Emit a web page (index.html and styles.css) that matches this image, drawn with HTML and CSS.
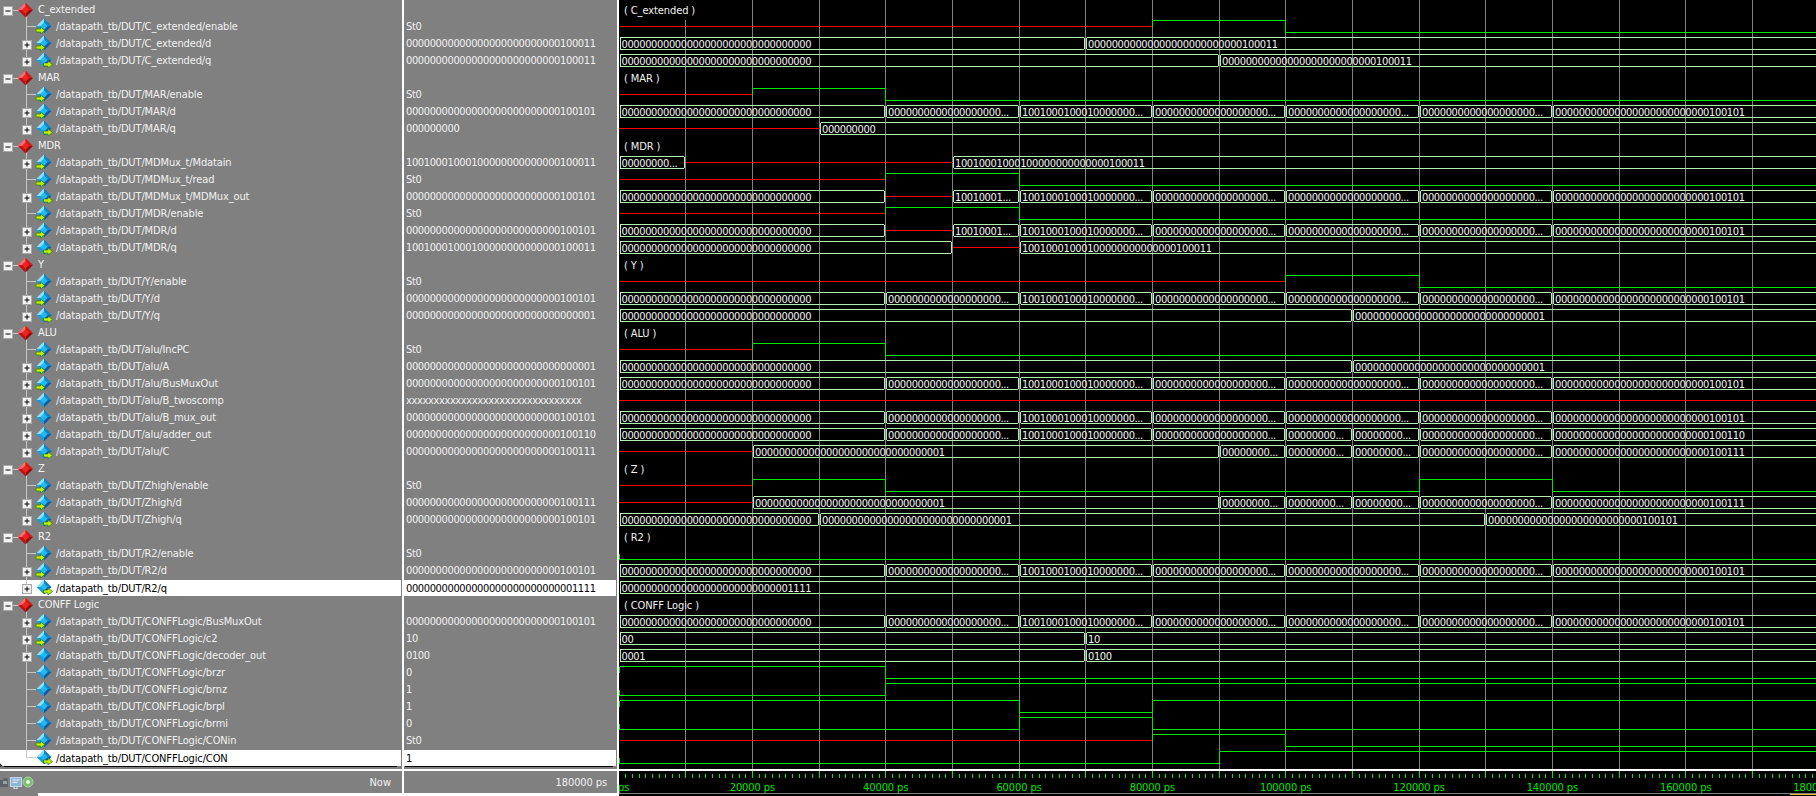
FILE: index.html
```html
<!DOCTYPE html>
<html lang="en">
<head>
<meta charset="utf-8">
<title>Wave - datapath_tb</title>
<link rel="stylesheet" href="styles.css">
</head>
<body>
<svg class="defs" aria-hidden="true">
  <defs>
    <symbol id="dia" viewBox="0 0 16 16">
      <polygon points="8,0 8,8 0,8" fill="#8fe0fa"/>
      <polygon points="8,0 16,8 8,8" fill="#0c86c8"/>
      <polygon points="16,8 8,16 8,8" fill="#0a5fa8"/>
      <polygon points="0,8 8,16 8,8" fill="#1c9ad8"/>
      <polygon points="8,4 12,8 8,12 4,8" fill="#22b8f0"/>
    </symbol>
    <symbol id="dia-r" viewBox="0 0 16 16">
      <polygon points="8,0 8,8 0,8" fill="#ff6a6a"/>
      <polygon points="8,0 16,8 8,8" fill="#d81818"/>
      <polygon points="16,8 8,16 8,8" fill="#9a0808"/>
      <polygon points="0,8 8,16 8,8" fill="#c01010"/>
      <polygon points="8,4 12,8 8,12 4,8" fill="#f02424"/>
    </symbol>
    <symbol id="arr" viewBox="0 0 10 8">
      <polygon points="0.5,2.5 5,2.5 5,0.5 9.5,4 5,7.5 5,5.5 0.5,5.5" fill="#c4f000" stroke="#1f7a10" stroke-width="0.7"/>
    </symbol>
    <g id="box"><rect x="22.5" y="5.5" width="9" height="9" fill="#f2f2f2" stroke="#a8a8a8"/><path d="M24.5 10h5M27 7.500v5" stroke="#000" fill="none"/></g>
    <path id="v-full" d="M26.5 0v17" stroke="#c8c8c8" fill="none"/>
    <path id="v-end" d="M26.5 0v9" stroke="#c8c8c8" fill="none"/>
    <path id="h" d="M26 8.5h10" stroke="#c8c8c8" fill="none"/>
    <g id="b"><use href="#dia" x="36" y="0.5" width="16" height="15"/></g>
    <g id="in"><use href="#arr" x="35.5" y="8.5" width="10" height="8"/></g>
    <g id="out"><use href="#arr" x="43" y="8.5" width="10" height="8"/></g>

    <symbol id="group" viewBox="0 0 38 17">
      <rect x="3.5" y="5.5" width="9" height="9" fill="#f2f2f2" stroke="#a8a8a8"/>
      <path d="M5.5 10h5" stroke="#000" fill="none"/>
      <path d="M13 9.5h6M26.5 14v3" stroke="#c8c8c8" fill="none"/>
      <use href="#dia-r" x="18" y="1.5" width="15" height="15"/>
    </symbol>
    <symbol id="leaf-in" viewBox="0 0 54 17"><use href="#v-full"/><use href="#h"/><use href="#b"/><use href="#in"/></symbol>
    <symbol id="leaf" viewBox="0 0 54 17"><use href="#v-full"/><use href="#h"/><use href="#b"/></symbol>
    <symbol id="leaf-out-end" viewBox="0 0 54 17"><use href="#v-end"/><use href="#h"/><use href="#b"/><use href="#out"/></symbol>
    <symbol id="bus-in" viewBox="0 0 54 17"><use href="#v-full"/><use href="#b"/><use href="#in"/><use href="#box"/></symbol>
    <symbol id="bus" viewBox="0 0 54 17"><use href="#v-full"/><use href="#b"/><use href="#box"/></symbol>
    <symbol id="bus-out" viewBox="0 0 54 17"><use href="#v-full"/><use href="#b"/><use href="#out"/><use href="#box"/></symbol>
    <symbol id="bus-out-end" viewBox="0 0 54 17"><use href="#v-end"/><use href="#b"/><use href="#out"/><use href="#box"/></symbol>
  </defs>
</svg>

<main class="window">
  <section class="names">
    <div class="row group"><svg class="ic"><use href="#group"/></svg><span>C_extended</span></div>
    <div class="row"><svg class="ic"><use href="#leaf-in"/></svg><span>/datapath_tb/DUT/C_extended/enable</span></div>
    <div class="row"><svg class="ic"><use href="#bus-in"/></svg><span>/datapath_tb/DUT/C_extended/d</span></div>
    <div class="row"><svg class="ic"><use href="#bus-out-end"/></svg><span>/datapath_tb/DUT/C_extended/q</span></div>
    <div class="row group"><svg class="ic"><use href="#group"/></svg><span>MAR</span></div>
    <div class="row"><svg class="ic"><use href="#leaf-in"/></svg><span>/datapath_tb/DUT/MAR/enable</span></div>
    <div class="row"><svg class="ic"><use href="#bus-in"/></svg><span>/datapath_tb/DUT/MAR/d</span></div>
    <div class="row"><svg class="ic"><use href="#bus-out-end"/></svg><span>/datapath_tb/DUT/MAR/q</span></div>
    <div class="row group"><svg class="ic"><use href="#group"/></svg><span>MDR</span></div>
    <div class="row"><svg class="ic"><use href="#bus-in"/></svg><span>/datapath_tb/DUT/MDMux_t/Mdatain</span></div>
    <div class="row"><svg class="ic"><use href="#leaf-in"/></svg><span>/datapath_tb/DUT/MDMux_t/read</span></div>
    <div class="row"><svg class="ic"><use href="#bus-out"/></svg><span>/datapath_tb/DUT/MDMux_t/MDMux_out</span></div>
    <div class="row"><svg class="ic"><use href="#leaf-in"/></svg><span>/datapath_tb/DUT/MDR/enable</span></div>
    <div class="row"><svg class="ic"><use href="#bus-in"/></svg><span>/datapath_tb/DUT/MDR/d</span></div>
    <div class="row"><svg class="ic"><use href="#bus-out-end"/></svg><span>/datapath_tb/DUT/MDR/q</span></div>
    <div class="row group"><svg class="ic"><use href="#group"/></svg><span>Y</span></div>
    <div class="row"><svg class="ic"><use href="#leaf-in"/></svg><span>/datapath_tb/DUT/Y/enable</span></div>
    <div class="row"><svg class="ic"><use href="#bus-in"/></svg><span>/datapath_tb/DUT/Y/d</span></div>
    <div class="row"><svg class="ic"><use href="#bus-out-end"/></svg><span>/datapath_tb/DUT/Y/q</span></div>
    <div class="row group"><svg class="ic"><use href="#group"/></svg><span>ALU</span></div>
    <div class="row"><svg class="ic"><use href="#leaf-in"/></svg><span>/datapath_tb/DUT/alu/IncPC</span></div>
    <div class="row"><svg class="ic"><use href="#bus-in"/></svg><span>/datapath_tb/DUT/alu/A</span></div>
    <div class="row"><svg class="ic"><use href="#bus-in"/></svg><span>/datapath_tb/DUT/alu/BusMuxOut</span></div>
    <div class="row"><svg class="ic"><use href="#bus"/></svg><span>/datapath_tb/DUT/alu/B_twoscomp</span></div>
    <div class="row"><svg class="ic"><use href="#bus"/></svg><span>/datapath_tb/DUT/alu/B_mux_out</span></div>
    <div class="row"><svg class="ic"><use href="#bus"/></svg><span>/datapath_tb/DUT/alu/adder_out</span></div>
    <div class="row"><svg class="ic"><use href="#bus-out-end"/></svg><span>/datapath_tb/DUT/alu/C</span></div>
    <div class="row group"><svg class="ic"><use href="#group"/></svg><span>Z</span></div>
    <div class="row"><svg class="ic"><use href="#leaf-in"/></svg><span>/datapath_tb/DUT/Zhigh/enable</span></div>
    <div class="row"><svg class="ic"><use href="#bus-in"/></svg><span>/datapath_tb/DUT/Zhigh/d</span></div>
    <div class="row"><svg class="ic"><use href="#bus-out-end"/></svg><span>/datapath_tb/DUT/Zhigh/q</span></div>
    <div class="row group"><svg class="ic"><use href="#group"/></svg><span>R2</span></div>
    <div class="row"><svg class="ic"><use href="#leaf-in"/></svg><span>/datapath_tb/DUT/R2/enable</span></div>
    <div class="row"><svg class="ic"><use href="#bus-in"/></svg><span>/datapath_tb/DUT/R2/d</span></div>
    <div class="row sel"><svg class="ic"><use href="#bus-out-end"/></svg><span>/datapath_tb/DUT/R2/q</span></div>
    <div class="row group"><svg class="ic"><use href="#group"/></svg><span>CONFF Logic</span></div>
    <div class="row"><svg class="ic"><use href="#bus-in"/></svg><span>/datapath_tb/DUT/CONFFLogic/BusMuxOut</span></div>
    <div class="row"><svg class="ic"><use href="#bus-in"/></svg><span>/datapath_tb/DUT/CONFFLogic/c2</span></div>
    <div class="row"><svg class="ic"><use href="#bus"/></svg><span>/datapath_tb/DUT/CONFFLogic/decoder_out</span></div>
    <div class="row"><svg class="ic"><use href="#leaf"/></svg><span>/datapath_tb/DUT/CONFFLogic/brzr</span></div>
    <div class="row"><svg class="ic"><use href="#leaf"/></svg><span>/datapath_tb/DUT/CONFFLogic/brnz</span></div>
    <div class="row"><svg class="ic"><use href="#leaf"/></svg><span>/datapath_tb/DUT/CONFFLogic/brpl</span></div>
    <div class="row"><svg class="ic"><use href="#leaf"/></svg><span>/datapath_tb/DUT/CONFFLogic/brmi</span></div>
    <div class="row"><svg class="ic"><use href="#leaf-in"/></svg><span>/datapath_tb/DUT/CONFFLogic/CONin</span></div>
    <div class="row sel"><svg class="ic"><use href="#leaf-out-end"/></svg><span>/datapath_tb/DUT/CONFFLogic/CON</span></div>
    <div class="ruler"></div>
    <svg class="pointer" viewBox="0 0 4 6"><path d="M0 0l3.5 3.5H1.5L0 5.5z" fill="#000" stroke="#fff" stroke-width="0.4"/></svg>
  </section>

  <section class="values">
    <div class="row"></div>
    <div class="row">St0</div>
    <div class="row">00000000000000000000000000100011</div>
    <div class="row">00000000000000000000000000100011</div>
    <div class="row"></div>
    <div class="row">St0</div>
    <div class="row">00000000000000000000000000100101</div>
    <div class="row">000000000</div>
    <div class="row"></div>
    <div class="row">10010001000100000000000000100011</div>
    <div class="row">St0</div>
    <div class="row">00000000000000000000000000100101</div>
    <div class="row">St0</div>
    <div class="row">00000000000000000000000000100101</div>
    <div class="row">10010001000100000000000000100011</div>
    <div class="row"></div>
    <div class="row">St0</div>
    <div class="row">00000000000000000000000000100101</div>
    <div class="row">00000000000000000000000000000001</div>
    <div class="row"></div>
    <div class="row">St0</div>
    <div class="row">00000000000000000000000000000001</div>
    <div class="row">00000000000000000000000000100101</div>
    <div class="row">xxxxxxxxxxxxxxxxxxxxxxxxxxxxxxxx</div>
    <div class="row">00000000000000000000000000100101</div>
    <div class="row">00000000000000000000000000100110</div>
    <div class="row">00000000000000000000000000100111</div>
    <div class="row"></div>
    <div class="row">St0</div>
    <div class="row">00000000000000000000000000100111</div>
    <div class="row">00000000000000000000000000100101</div>
    <div class="row"></div>
    <div class="row">St0</div>
    <div class="row">00000000000000000000000000100101</div>
    <div class="row sel">00000000000000000000000000001111</div>
    <div class="row"></div>
    <div class="row">00000000000000000000000000100101</div>
    <div class="row">10</div>
    <div class="row">0100</div>
    <div class="row">0</div>
    <div class="row">1</div>
    <div class="row">1</div>
    <div class="row">0</div>
    <div class="row">St0</div>
    <div class="row sel">1</div>
    <div class="ruler"></div>
  </section>

  <section class="wave"><svg id="wave" class="wave-svg" width="1197" height="769"></svg></section>

  <footer class="foot-names">
    <svg class="foot-icons" viewBox="0 0 34 14" width="34" height="14">
      <path d="M0 5h3l1-2h3l1 2v7H0z" fill="#5c6268"/><path d="M3 6h4v3H3z" fill="#9aa0a6"/>
      <rect x="10.5" y="2.5" width="11" height="9" fill="#8eb4dc" stroke="#c4d8ee"/><path d="M12.5 5h7M12.5 7.500h5M14 12v2h3v-2" stroke="#eef4fa" fill="none"/>
      <circle cx="28" cy="7" r="5" fill="#7dbd72" stroke="#a8d8a0"/><circle cx="28" cy="7" r="2" fill="#eaf6e6"/>
    </svg>
    <span>Now</span>
  </footer>
  <footer class="foot-values">180000 ps</footer>
  <footer class="foot-axis"><svg id="axis" class="wave-svg" width="1197" height="22"></svg></footer>

  <div class="strip">
    <div class="strip-gray"></div>
    <div class="strip-white"></div>
    <div class="strip-dark"><div class="cursor-top"></div></div>
  </div>
</main>
<script src="wave.js"></script>
</body>
</html>
```
FILE: styles.css
```css
* { box-sizing: border-box; }
html, body { margin: 0; padding: 0; height: 796px; overflow: hidden; background: #fff; }
body {
  font-family: "DejaVu Sans Condensed", "DejaVu Sans", sans-serif;
  font-stretch: condensed;
  font-size: 11px;
  color: #f2f2f2;
}
.defs { width: 0; height: 0; display: block; position: absolute; }

.window {
  display: grid;
  grid-template-columns: 402px 213px 1fr;
  grid-template-rows: 769px 22px 3px;
  column-gap: 2px;
  row-gap: 2px;
  width: 1816px;
  height: 796px;
  background: #fff;
}
.names, .values { background: #808080; padding-top: 1px; position: relative; overflow: hidden; }
.wave { background: #000; overflow: hidden; }
.wave-svg { display: block; }

.row { display: flex; align-items: center; height: 17px; line-height: 17px; white-space: nowrap; }
.names .row { margin-right: 1px; letter-spacing: -0.13px; }
.values .row { padding-left: 2px; margin-right: 1px; letter-spacing: -0.37px; }
.ic { width: 54px; height: 17px; margin-right: 2px; flex: none; }
.group .ic { width: 38px; margin-right: 0; }
.sel { color: #000; background: #fff; background-clip: padding-box; border-top: 1px solid transparent; }
.sel .ic { margin-top: -1px; }

.ruler { height: 1px; margin-right: 5px; background: #000; }
.values .ruler { margin-left: 1px; margin-right: 4px; }
.pointer { position: absolute; left: 0; top: 763px; width: 4px; height: 6px; }

.foot-names, .foot-values { background: #808080; display: flex; align-items: center; justify-content: flex-end; }
.foot-names { padding-right: 11px; }
.foot-values { padding-right: 10px; letter-spacing: -0.1px; }
.foot-icons { margin-right: auto; }
.foot-axis { background: #000; overflow: hidden; }

.strip { grid-column: 1 / -1; margin-top: -2px; display: flex; height: 3px; }
.strip-gray { width: 38px; background: #808080; }
.strip-white { flex: 1; background: #fff; }
.strip-dark { width: 1197px; background: #000; border-top: 1px solid #808080; display: flex; justify-content: flex-end; }
.cursor-top { width: 26px; height: 1px; background: #f0c020; }

.grid { stroke: #808080; }
.bus { fill: none; stroke: #b4f0b4; }
.lvl { stroke: #00e800; }
.lvl-x { stroke: #ff0000; }
.tick { stroke: #00e800; }
.lbl { fill: #f2f2f2; font-size: 11px; letter-spacing: -0.1px; }
.bus-text { fill: #f4f4f4; font-size: 11px; letter-spacing: -0.37px; }
.axis-text { fill: #00e800; font-size: 11px; letter-spacing: -0.1px; text-anchor: middle; }
.mask { fill: #000; }
.crisp { shape-rendering: crispEdges; }
```
FILE: wave.js
```js
// Draws the waveform pane from the simulation data.
var U = 66.67, END = 30;
var Z32 = '0'.repeat(32), Z19 = '0'.repeat(19) + '...', Z8 = '0'.repeat(8) + '...';
var O19 = '1001000100010000000...', O8 = '10010001...';
var v23 = '00000000000000000000000000100011', v25 = '00000000000000000000000000100101';
var v26 = '00000000000000000000000000100110', v27 = '00000000000000000000000000100111';
var v1 = '00000000000000000000000000000001', v15 = '00000000000000000000000000001111';
var vM = '10010001000100000000000000100011';

var common = [[0,4,Z32],[4,6,Z19],[6,8,O19],[8,10,Z19],[10,12,Z19],[12,14,Z19],[14,END,v25]];
var mux = [[0,4,Z32],[4,5,null],[5,6,O8],[6,8,O19],[8,10,Z19],[10,12,Z19],[12,14,Z19],[14,END,v25]];
var cBus = [[0,2,null],[2,9,v1],[9,10,Z8],[10,11,Z8],[11,12,Z8],[12,14,Z19],[14,END,v27]];

var rows = {
  0:{l:'( C_extended )'},
  1:{w:[[0,8,'x'],[8,10,1],[10,END,0]]},
  2:{b:[[0,7,Z32],[7,END,v23]]},
  3:{b:[[0,9,Z32],[9,END,v23]]},
  4:{l:'( MAR )'},
  5:{w:[[0,2,'x'],[2,4,1],[4,END,0]]},
  6:{b:common},
  7:{b:[[0,3,null],[3,END,'000000000']]},
  8:{l:'( MDR )'},
  9:{b:[[0,1,Z8],[1,5,null],[5,END,vM]]},
  10:{w:[[0,4,'x'],[4,6,1],[6,END,0]]},
  11:{b:mux},
  12:{w:[[0,4,'x'],[4,6,1],[6,END,0]]},
  13:{b:mux},
  14:{b:[[0,5,Z32],[5,6,null],[6,END,vM]]},
  15:{l:'( Y )'},
  16:{w:[[0,10,'x'],[10,12,1],[12,END,0]]},
  17:{b:common},
  18:{b:[[0,11,Z32],[11,END,v1]]},
  19:{l:'( ALU )'},
  20:{w:[[0,2,'x'],[2,4,1],[4,END,0]]},
  21:{b:[[0,11,Z32],[11,END,v1]]},
  22:{b:common},
  23:{b:[[0,END,null]]},
  24:{b:common},
  25:{b:[[0,4,Z32],[4,6,Z19],[6,8,O19],[8,10,Z19],[10,11,Z8],[11,12,Z8],[12,14,Z19],[14,END,v26]]},
  26:{b:cBus},
  27:{l:'( Z )'},
  28:{w:[[0,2,'x'],[2,4,1],[4,12,0],[12,14,1],[14,END,0]]},
  29:{b:cBus},
  30:{b:[[0,3,Z32],[3,13,v1],[13,END,v25]]},
  31:{l:'( R2 )'},
  32:{w:[[0,END,0]]},
  33:{b:common},
  34:{b:[[0,END,v15]]},
  35:{l:'( CONFF Logic )'},
  36:{b:common},
  37:{b:[[0,7,'00'],[7,END,'10']]},
  38:{b:[[0,7,'0001'],[7,END,'0100']]},
  39:{w:[[0,4,1],[4,END,0]]},
  40:{w:[[0,4,0],[4,END,1]]},
  41:{w:[[0,6,1],[6,8,0],[8,END,1]]},
  42:{w:[[0,6,0],[6,8,1],[8,END,0]]},
  43:{w:[[0,8,'x'],[8,10,1],[10,END,0]]},
  44:{w:[[0,9,0],[9,END,1]]}
};

function px(u) { return Math.floor(U * u) + 0.5; }
function line(c, x1, y1, x2, y2) {
  return '<line class="' + c + ' crisp" x1="' + x1 + '" y1="' + y1 + '" x2="' + x2 + '" y2="' + y2 + '"/>';
}
function busShape(a, b, top, bot) {
  return '<polygon class="bus crisp" points="' + [
    [a + 2, top], [b - 2, top], [b - 1, top + 1.5], [b - 1, bot - 1.5], [b - 2, bot],
    [a + 2, bot], [a + 1, bot - 1.5], [a + 1, top + 1.5]
  ].map(String).join(' ') + '"/>';
}

var out = '';
for (var g = 1; g <= 17; g++) out += line('grid', px(g), 0, px(g), 769);

Object.keys(rows).forEach(function (k) {
  var n = +k, r = rows[k], y0 = 17 * n, top = y0 + 3.5, bot = y0 + 15.5, mid = y0 + 9.5;
  if (r.l) {
    if (n === 0) out += '<rect class="mask" x="0" y="0" width="80" height="20"/>';
    out += '<text class="lbl" x="5" y="' + (y0 + 14) + '">' + r.l + '</text>';
  }
  (r.b || []).forEach(function (s) {
    var a = s[0] === 0 ? 0 : px(s[0]), b = px(s[1]);
    if (s[2] === null) { out += line('lvl-x', a, mid, b, mid); return; }
    out += busShape(a, b, top, bot);
  });
  (r.b || []).forEach(function (s) {
    if (s[2] === null) return;
    var a = s[0] === 0 ? 0 : px(s[0]);
    out += '<text class="bus-text" x="' + (a + 2.5) + '" y="' + (y0 + 14) + '">' + s[2] + '</text>';
  });
  var prevY = mid;
  (r.w || []).forEach(function (s) {
    var a = s[0] === 0 ? 0.5 : px(s[0]), b = px(s[1]);
    if (s[2] === 'x') { out += line('lvl-x', a, mid, b, mid); prevY = mid; return; }
    var y = s[2] === 1 ? top : bot;
    out += line('lvl', a, prevY, a, y) + line('lvl', a, y, b, y);
    prevY = y;
  });
});
document.getElementById('wave').innerHTML = out;

var ax = '';
for (var t = 1; t <= 180; t++) {
  var x = Math.floor(U * t / 10) + 0.5, major = t % 10 === 0;
  ax += line('tick', x, major ? 0 : 3, x, 7);
}
for (var u = 0; u <= 18; u += 2) {
  ax += '<text class="axis-text" x="' + (U * u) + '" y="20">' + (u * 10000) + ' ps</text>';
}
document.getElementById('axis').innerHTML = ax;
```
